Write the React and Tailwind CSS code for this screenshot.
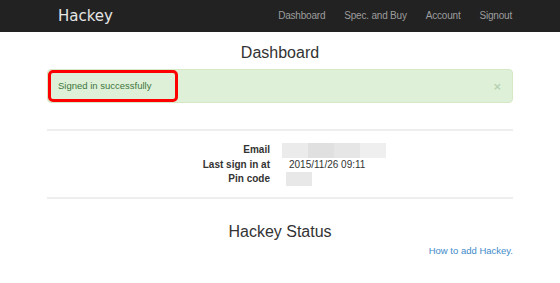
export default function App() {
  return (
    <div className="h-[283px] w-[560px] overflow-hidden bg-white font-['Liberation_Sans',Arial,sans-serif] text-[#333]">
      <nav className="h-8 bg-[#222]">
        <div className="mx-auto flex h-full w-[464px] items-center justify-between">
          <span className="pl-[10px] font-['DejaVu_Sans',sans-serif] text-[15px] leading-none text-[#e6e6e6]">Hackey</span>
          <ul className="flex items-center gap-[19px] text-[10px] leading-none tracking-[-0.2px] text-[#9d9d9d]">
            <li>Dashboard</li>
            <li>Spec. and Buy</li>
            <li>Account</li>
            <li>Signout</li>
          </ul>
        </div>
      </nav>

      <main className="mx-auto w-[466px]">
        <h1 className="mt-[11px] text-center text-[16px] leading-5">Dashboard</h1>

        <div className="relative mt-[6px] flex h-[34px] items-center justify-between rounded border border-[#d6e9c6] bg-[#dff0d8] pl-[10px] pr-[11px] text-[9.5px] text-[#3c763d]">
          <span>Signed in successfully</span>
          <span className="text-[13px] font-bold leading-none text-[#3c763d]/25">×</span>
          <div className="absolute left-0 top-0 h-[32px] w-[130px] rounded-[5px] border-[3px] border-[#f00]" />
        </div>

        <hr className="mt-[26px] border-t-2 border-[#eee]" />

        <div className="mt-[12px] grid grid-cols-[223px_1fr] gap-x-[12px] text-[10px] leading-[14px]">
          <div className="text-right font-bold">Email</div>
          <div className="flex h-[15px]">
            <span className="w-[26px] bg-[#ebebeb]" />
            <span className="w-[26px] bg-[#e0e0e0]" />
            <span className="w-[26px] bg-[#e6e6e6]" />
            <span className="w-[26px] bg-[#efefef]" />
          </div>
          <div className="text-right font-bold">Last sign in at</div>
          <div className="pl-[7px]">2015/11/26 09:11</div>
          <div className="text-right font-bold">Pin code</div>
          <div className="pl-[4px]">
            <span className="block h-[14px] w-[26px] bg-[#e8e8e8]" />
          </div>
        </div>

        <hr className="mt-[11px] border-t-2 border-[#eee]" />

        <h2 className="mt-[23px] text-center text-[16px] leading-5">Hackey Status</h2>
        <p className="mt-[2px] text-right text-[9.5px] leading-[14px] text-[#428bca]">How to add Hackey.</p>
      </main>
    </div>
  );
}
